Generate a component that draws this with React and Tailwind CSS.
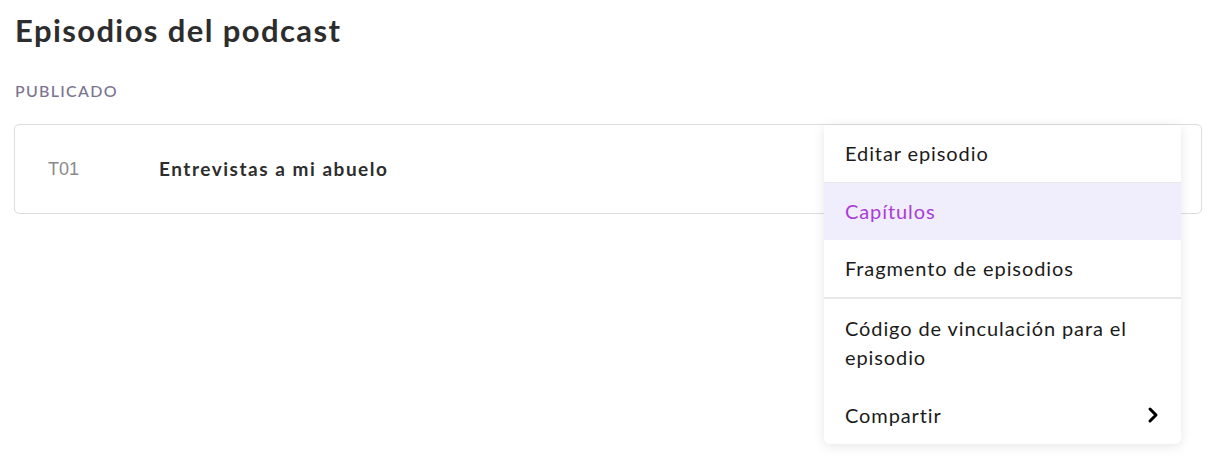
import { ChevronRight } from "lucide-react";

const groups = [
  [{ label: "Editar episodio" }],
  [{ label: "Capítulos", active: true }, { label: "Fragmento de episodios" }],
  [
    { label: "Código de vinculación para el episodio", tall: true },
    { label: "Compartir", sub: true, tall: true },
  ],
];

const EpisodeMenu = () => {
  return (
    <div className="absolute top-0 right-[20px] w-[357px] bg-white rounded-b-md shadow-[0_2px_12px_rgba(0,0,0,0.10)] z-10">
      {groups.map((group, i) => (
        <div
          key={i}
          className={i > 0 ? (i === 2 ? "border-t-2 border-[#e8e8e8]" : "border-t border-[#e8e8e8]") : ""}
        >
          {group.map((item) => (
            <button
              key={item.label}
              className={`w-full flex items-center justify-between text-left pl-[21px] pr-[16px] text-[20px] leading-[29px] tracking-[0.045em] ${
                item.tall ? "py-[14.5px]" : "py-[14px]"
              } ${item.active ? "bg-[#f0edfd] text-[#aa3dd8]" : "text-[#1b1b1b]"}`}
            >
              <span className="pr-8">{item.label}</span>
              {item.sub && (
                <ChevronRight size={24} strokeWidth={3} className="text-black shrink-0 -my-2" />
              )}
            </button>
          ))}
        </div>
      ))}
    </div>
  );
};

export default function App() {
  return (
    <div className="min-h-[472px] bg-white pl-[14px] pr-[10px] pt-[12px] font-['Lato',sans-serif]">
      <h1 className="pl-[1px] text-[31px] leading-[36px] font-bold tracking-[0.045em] text-[#2d2d2d]">
        Episodios del podcast
      </h1>

      <div className="mt-[33px] pl-[1px] text-[16px] leading-[20px] font-medium tracking-[0.08em] text-[#7b7390]">
        PUBLICADO
      </div>

      <div className="relative mt-[23px] h-[90px] border border-[#dddddd] rounded-[5px] flex items-center">
        <span className="w-[144px] pl-[33px] text-[18px] text-[#8a8a8a] font-['Liberation_Sans',sans-serif]">
          T01
        </span>
        <span className="text-[19px] font-bold tracking-[0.08em] text-[#2d2d2d]">
          Entrevistas a mi abuelo
        </span>
        <EpisodeMenu />
      </div>
    </div>
  );
}
